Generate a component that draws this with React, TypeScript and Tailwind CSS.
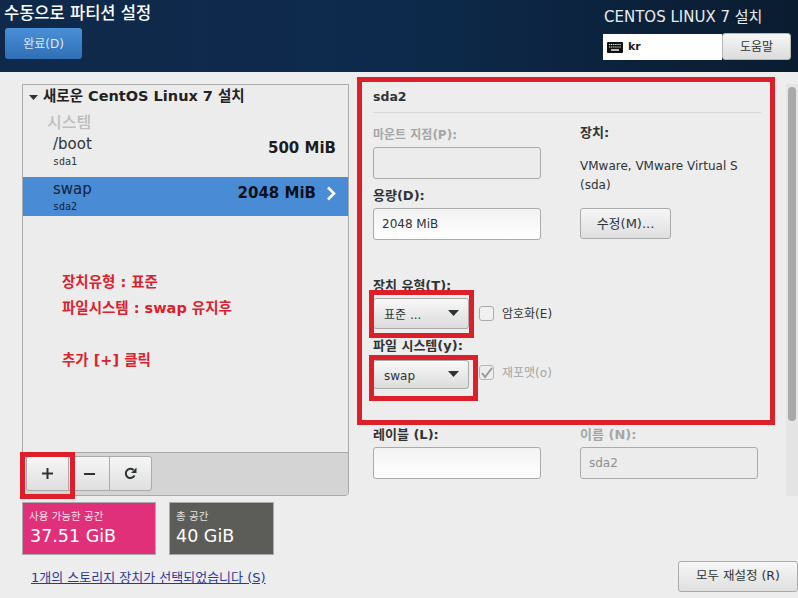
const ko = { fontFamily: '"DejaVu Sans","Noto Sans CJK KR",sans-serif' };

function Label({ children, muted, small }: { children: React.ReactNode; muted?: boolean; small?: boolean }) {
  return (
    <div className={`${small ? "text-[12px]" : "text-[13px]"} leading-[16px] font-bold h-4 whitespace-nowrap ${muted ? "text-[#a4a6a6]" : "text-[#2e3436]"}`}>{children}</div>
  );
}

function Field({ value, disabled, w = "w-[168px]" }: { value?: string; disabled?: boolean; w?: string }) {
  return (
    <div
      className={`${w} h-[32px] mt-[4px] rounded-[3px] border border-[#a9abab] flex items-center px-[8px] text-[12px] ${
        disabled ? "bg-[#ececec] text-[#8f9191]" : "bg-gradient-to-b from-[#f2f2f2] to-white text-[#2e3436]"
      }`}
    >
      {value}
    </div>
  );
}

function Select({ value, h }: { value: string; h: string }) {
  return (
    <div className={`w-[96px] ${h} rounded-[3px] border border-[#a9abab] bg-gradient-to-b from-[#f8f8f8] to-[#dcdcdc] flex items-center justify-between pl-[10px] pr-[9px] text-[12px] text-[#2e3436]`}>
      <span className="pt-[3px]">{value}</span>
      <svg width="11" height="6" viewBox="0 0 11 6" className="-mt-[2px]"><path d="M0 0h11L5.5 6z" fill="#2e3436" /></svg>
    </div>
  );
}

function Row({ name, dev, size, selected, h }: { name: string; dev: string; size: string; selected?: boolean; h: string }) {
  return (
    <div className={`${h} pl-[30px] pr-[12px] pt-[2px] flex items-start justify-between ${selected ? "bg-[#4a8bd6] text-[#11223a]" : "text-[#2e3436]"}`}>
      <div className="flex flex-col">
        <span className="text-[15px] leading-[20px] font-medium">{name}</span>
        <span className="text-[10px] leading-[16px]" style={{ fontFamily: '"DejaVu Sans Mono",monospace' }}>{dev}</span>
      </div>
      <div className="flex items-center gap-[10px] pt-[4px]">
        <span className="text-[15px] leading-[20px] font-bold text-black/90">{size}</span>
        {selected && (
          <svg width="10" height="15" viewBox="0 0 10 15"><path d="M2 1.5 8 7.5 2 13.5" stroke="white" strokeWidth="2.6" fill="none" /></svg>
        )}
      </div>
    </div>
  );
}

function Overlay({ c }: { c: string }) {
  return <div className={`absolute border-[5px] border-[#dd1f2b] pointer-events-none ${c}`} />;
}

export default function App() {
  return (
    <div className="relative w-[798px] h-[598px] overflow-hidden bg-[#ededed] flex flex-col" style={ko}>
      <header className="h-[72px] shrink-0 flex justify-between bg-gradient-to-r from-[#10294a] via-[#0d2a4c] to-[#0a1c30]">
        <div className="pl-[4px] pt-[3px]">
          <div className="text-[16.5px] leading-[22px] text-white font-medium">수동으로 파티션 설정</div>
          <div className="mt-[3px] ml-[1px] w-[77px] h-[31px] rounded-[3px] bg-gradient-to-b from-[#4a90d9] to-[#2f6fb5] text-[#dfe9f5] text-[12px] flex items-center justify-center">완료(D)</div>
        </div>
        <div className="w-[195px] pt-[7px] flex flex-col">
          <div className="pl-[1px] text-[15px] leading-[20px] text-[#e8ecf0] whitespace-nowrap">CENTOS LINUX 7 설치</div>
          <div className="mt-[7px] flex">
            <div className="w-[119px] h-[26px] bg-white flex items-center pl-[4px] gap-[5px] text-[11px] font-bold text-[#222]">
              <svg width="16" height="11" viewBox="0 0 16 11">
                <rect width="16" height="11" rx="1" fill="#111" />
                <path d="M2 2.5h12M2 5h12" stroke="white" strokeWidth="1.2" strokeDasharray="1.2 .9" />
                <path d="M4 8h8" stroke="white" strokeWidth="1.4" />
              </svg>
              kr
            </div>
            <div className="w-[69px] h-[27px] -mt-[1px] rounded-[3px] border border-[#b5b7b7] bg-gradient-to-b from-[#f6f6f6] to-[#dcdcdc] text-[12px] text-[#2e3436] flex items-center justify-center">도움말</div>
          </div>
        </div>
      </header>

      <main className="flex-1 flex items-start pt-[12px] pl-[22px]">
        <div className="w-[327px] shrink-0 flex flex-col">
          <div className="h-[412px] rounded-b-[4px] border border-[#a9abab] flex flex-col bg-[#ececec]">
            <div className="h-[24px] shrink-0 pl-[6px] flex items-center gap-[5px] text-[14.5px] font-bold text-[#222]">
              <svg width="9" height="5" viewBox="0 0 9 5"><path d="M0 0h9L4.5 5z" fill="#333" /></svg>
              새로운 CentOS Linux 7 설치
            </div>
            <div className="pl-[24px] h-[23px] shrink-0 pt-[2px] text-[16px] leading-[24px] font-medium text-[#bcbebe]">시스템</div>
            <Row name="/boot" dev="sda1" size="500 MiB" h="h-[45px]" />
            <Row name="swap" dev="sda2" size="2048 MiB" selected h="h-[39px]" />
            <div className="flex-1 pl-[39px] pt-[53px] text-[14.5px] font-bold text-[#d8232e] leading-[26px]">
              <div>장치유형 : 표준</div>
              <div>파일시스템 : swap 유지후</div>
              <div className="mt-[26px]">추가 [+] 클릭</div>
            </div>
            <div className="h-[43px] shrink-0 border-t border-[#a9abab] bg-[#d4d4d4] pl-[3px] pt-[3px] rounded-b-[4px]">
              <div className="w-[126px] h-[35px] flex rounded-[3px] border border-[#a9abab] bg-gradient-to-b from-[#f6f6f6] to-[#dfdfdf] text-[#2e3436]">
                <div className="w-[42px] border-r border-[#a9abab] flex items-center justify-center">
                  <svg width="11" height="11" viewBox="0 0 11 11"><path d="M5.5 0v11M0 5.5h11" stroke="#2e3436" strokeWidth="2" /></svg>
                </div>
                <div className="w-[41px] border-r border-[#a9abab] flex items-center justify-center">
                  <svg width="11" height="2" viewBox="0 0 11 2"><path d="M0 1h11" stroke="#2e3436" strokeWidth="2" /></svg>
                </div>
                <div className="flex-1 flex items-center justify-center">
                  <svg width="13" height="13" viewBox="0 0 13 13"><path d="M10.5 8.5A4.6 4.6 0 1 1 9.5 3" stroke="#2e3436" strokeWidth="2" fill="none" /><path d="M12.5 .5v5.5H7z" fill="#2e3436" /></svg>
                </div>
              </div>
            </div>
          </div>
          <div className="mt-[6px] flex gap-[13px]">
            <div className="w-[134px] h-[53px] border border-[#a9abab] bg-[#e0307a] text-white pl-[6px] pt-[5px]">
              <div className="text-[10.5px] leading-[16px] text-[#fbe0ec]">사용 가능한 공간</div>
              <div className="text-[17.5px] leading-[25px] font-medium pl-[1px]">37.51 GiB</div>
            </div>
            <div className="w-[105px] h-[53px] border border-[#a9abab] bg-[#5c5c58] text-white pl-[6px] pt-[5px]">
              <div className="text-[10.5px] leading-[16px] text-[#e2e2e0]">총 공간</div>
              <div className="text-[17.5px] leading-[25px] font-medium">40 GiB</div>
            </div>
          </div>
          <div className="mt-[15px] ml-[9px] text-[13px] leading-[16px] text-[#2a3a9c] underline whitespace-nowrap">1개의 스토리지 장치가 선택되었습니다 (S)</div>
        </div>

        <div className="h-[508px] flex-1 flex flex-col pl-[24px]">
          <div className="flex flex-1 min-h-0">
            <section className="w-[388px] h-[411px] shrink-0">
              <div className="h-[29px] border-b border-[#d8d8d8] text-[12.5px] leading-[26px] font-bold text-[#2e3436]">sda2</div>
              <div className="flex mt-[14px]">
                <div className="w-[207px]">
                  <Label muted small>마운트 지점(P):</Label>
                  <Field disabled />
                  <div className="mt-[9px]"><Label>용량(D):</Label></div>
                  <Field value="2048 MiB" />
                  <div className="mt-[38px]"><Label>장치 유형(T):</Label></div>
                  <div className="mt-[4px] flex items-center gap-[10px]">
                    <Select value="표준 ..." h="h-[31px]" />
                    <div className="w-[15px] h-[15px] rounded-[3px] border border-[#a9abab] bg-[#f0f0f0]" />
                    <span className="text-[12px] text-[#2e3436] -ml-[2px]">암호화(E)</span>
                  </div>
                  <div className="mt-[9px]"><Label>파일 시스템(y):</Label></div>
                  <div className="mt-[6px] flex items-center gap-[10px]">
                    <Select value="swap" h="h-[29px]" />
                    <div className="w-[15px] h-[15px] -translate-y-[2px] rounded-[3px] border border-[#b5b7b7] flex items-center justify-center">
                      <svg width="13" height="12" viewBox="0 0 13 12"><path d="M2 6l3 4 7-9" stroke="#9a9c9c" strokeWidth="2" fill="none" /></svg>
                    </div>
                    <span className="text-[12px] text-[#a4a6a6] -ml-[2px] -translate-y-[2px]">재포맷(o)</span>
                  </div>
                </div>
                <div className="flex-1 -mt-[2px]">
                  <Label>장치:</Label>
                  <div className="mt-[16px] text-[12px] leading-[19px] text-[#2e3436] whitespace-nowrap">VMware, VMware Virtual S<br />(sda)</div>
                  <div className="mt-[13px] w-[91px] h-[31px] rounded-[3px] border border-[#a9abab] bg-gradient-to-b from-[#f6f6f6] to-[#dfdfdf] text-[13px] text-[#2e3436] flex items-center justify-center">수정(M)...</div>
                </div>
              </div>
              <div className="flex mt-[38px]">
                <div className="w-[207px]">
                  <Label>레이블 (L):</Label>
                  <Field />
                </div>
                <div>
                  <Label muted>이름 (N):</Label>
                  <Field disabled value="sda2" w="w-[178px]" />
                </div>
              </div>
            </section>
            <div className="ml-[25px] w-[12px] h-[412px] bg-[#e4e4e4] pt-[3px] px-[2px]">
              <div className="h-[334px] rounded-full bg-[#a9a9a9]" />
            </div>
          </div>
          <div className="flex justify-end">
            <div className="w-[120px] h-[31px] rounded-[3px] border border-[#a9abab] bg-gradient-to-b from-[#f6f6f6] to-[#dfdfdf] text-[12.5px] text-[#2e3436] flex items-center justify-center">모두 재설정 (R)</div>
          </div>
        </div>
      </main>

      <Overlay c="left-[357px] top-[77px] w-[418px] h-[348px]" />
      <Overlay c="left-[369px] top-[290px] w-[105px] h-[48px]" />
      <Overlay c="left-[369px] top-[355px] w-[109px] h-[46px]" />
      <Overlay c="left-[20px] top-[452px] w-[55px] h-[47px]" />
    </div>
  );
}
